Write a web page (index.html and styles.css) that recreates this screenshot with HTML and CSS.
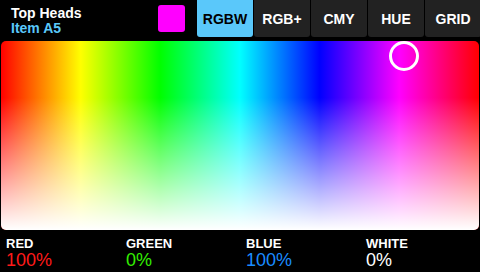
FILE: index.html
```html
<!DOCTYPE html>
<html lang="en">
<head>
    <meta charset="UTF-8">
    <title>Color Picker</title>
    <link rel="stylesheet" href="styles.css">
</head>
<body>
    <div class="screen">
        <div class="topbar">
            <div class="title">
                <div class="name">Top Heads</div>
                <div class="item">Item A5</div>
            </div>
            <div class="swatch"></div>
            <div class="tabs">
                <div class="tab active">RGBW</div>
                <div class="tab">RGB+</div>
                <div class="tab">CMY</div>
                <div class="tab">HUE</div>
                <div class="tab">GRID</div>
            </div>
        </div>

        <div class="picker">
            <div class="fade"></div>
            <div class="cursor" style="left: 403px; top: 15px;"></div>
        </div>

        <div class="readout">
            <div class="channel"><span class="label">RED</span><span class="value red">100%</span></div>
            <div class="channel"><span class="label">GREEN</span><span class="value green">0%</span></div>
            <div class="channel"><span class="label">BLUE</span><span class="value blue">100%</span></div>
            <div class="channel"><span class="label">WHITE</span><span class="value white">0%</span></div>
        </div>
    </div>
</body>
</html>
```

FILE: styles.css
```css
html, body {
    margin: 0;
    padding: 0;
    background: #000;
}

.screen {
    width: 480px;
    height: 272px;
    display: flex;
    flex-direction: column;
    font-family: "Liberation Sans", Arial, sans-serif;
    color: #fff;
    overflow: hidden;
}

.topbar {
    height: 41px;
    display: flex;
    align-items: flex-start;
}

.title {
    width: 147px;
    flex-shrink: 0;
    padding: 6px 0 0 11px;
    font-weight: bold;
    font-size: 14px;
    line-height: 15px;
}

.item {
    color: #5ac8fa;
}

.swatch {
    width: 27px;
    height: 27px;
    flex-shrink: 0;
    margin-top: 5px;
    background: #ff00ff;
    border-radius: 3px;
}

.tabs {
    margin-left: 12px;
    display: flex;
    gap: 1px;
}

.tab {
    width: 56px;
    height: 37px;
    flex-shrink: 0;
    background: #222;
    border-radius: 0 0 3px 3px;
    font-weight: bold;
    font-size: 14px;
    line-height: 38px;
    text-align: center;
}

.tab.active {
    background: #5ac8fa;
    color: #000;
}

.picker {
    position: relative;
    height: 189px;
    margin: 0 1px;
    border-radius: 5px;
    overflow: hidden;
    background: linear-gradient(to right, #f00 0%, #ff0 16.67%, #0f0 33.33%, #0ff 50%, #00f 66.67%, #f0f 83.33%, #f00 100%);
}

.fade {
    position: absolute;
    inset: 0;
    background: linear-gradient(to bottom, rgba(255,255,255,0) 30%, #fff 100%);
}

.cursor {
    position: absolute;
    width: 24px;
    height: 24px;
    margin: -15px 0 0 -15px;
    border: 3px solid #fff;
    border-radius: 50%;
}

.readout {
    display: flex;
    padding-top: 6px;
}

.channel {
    width: 114px;
    flex-shrink: 0;
    padding-left: 6px;
    display: flex;
    flex-direction: column;
}

.label {
    font-weight: bold;
    font-size: 13px;
    line-height: 15px;
}

.value {
    font-size: 18px;
    line-height: 18px;
}

.red { color: #ff1a1a; }
.green { color: #33ee00; }
.blue { color: #1a8cff; }
.white { color: #fff; }
```
